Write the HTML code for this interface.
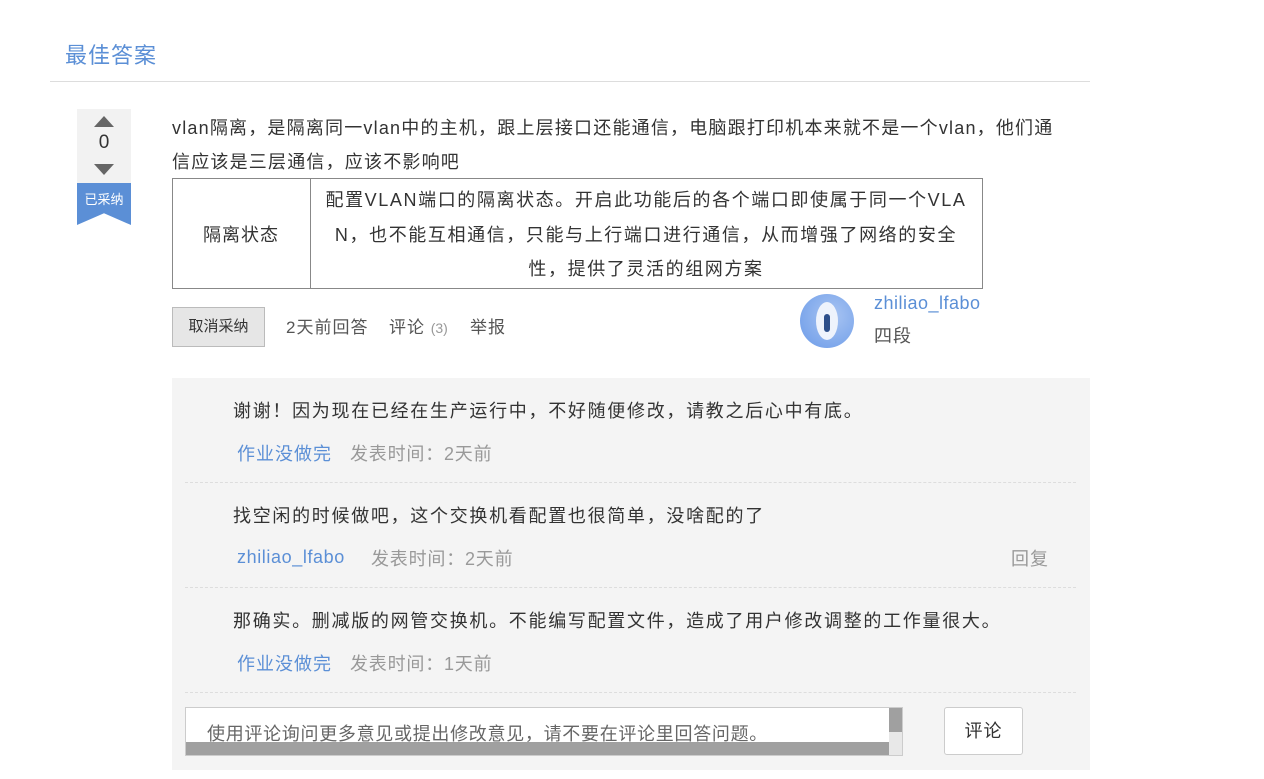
<!DOCTYPE html>
<html><head><meta charset="utf-8"><style>
body{margin:0;background:#fff;font-family:"Liberation Sans","Noto Sans CJK SC",sans-serif;color:#333;width:1264px;height:779px;overflow:hidden;position:relative}
.a{position:absolute;white-space:nowrap}
.blue{color:#5b8fd6}
.gray{color:#999}
.c{font-size:18px;letter-spacing:1.7px}
</style></head><body>
<div class="a blue" style="left:65px;top:38px;font-size:22px;letter-spacing:1px">最佳答案</div>
<div class="a" style="left:50px;top:81px;width:1040px;height:1px;background:#ddd"></div>

<div class="a" style="left:77px;top:109px;width:54px;height:74px;background:#f2f2f2"></div>
<div class="a" style="left:94px;top:116px;width:0;height:0;border-left:10px solid transparent;border-right:10px solid transparent;border-bottom:11px solid #666"></div>
<div class="a" style="left:77px;top:132px;width:54px;text-align:center;font-size:19px;color:#333">0</div>
<div class="a" style="left:94px;top:164px;width:0;height:0;border-left:10px solid transparent;border-right:10px solid transparent;border-top:11px solid #666"></div>
<div class="a" style="left:77px;top:183px;width:54px;height:42px;background:#5b8fd6;clip-path:polygon(0 0,100% 0,100% 100%,50% 72%,0 100%)"></div>
<div class="a" style="left:77px;top:189px;width:54px;text-align:center;font-size:13px;color:#fff">已采纳</div>

<div class="a c" style="left:172px;top:111px;line-height:34px;letter-spacing:1.2px">vlan隔离，是隔离同一vlan中的主机，跟上层接口还能通信，电脑跟打印机本来就不是一个vlan，他们通<br>信应该是三层通信，应该不影响吧</div>
<div class="a" style="left:172px;top:178px;width:809px;height:109px;border:1px solid #888"></div>
<div class="a" style="left:310px;top:178px;width:1px;height:111px;background:#888"></div>
<div class="a c" style="left:172px;top:221px;width:138px;text-align:center;letter-spacing:1px">隔离状态</div>
<div class="a c" style="left:311px;top:183px;width:670px;text-align:center;line-height:34.5px;letter-spacing:1.6px">配置VLAN端口的隔离状态。开启此功能后的各个端口即使属于同一个VLA<br>N，也不能互相通信，只能与上行端口进行通信，从而增强了网络的安全<br>性，提供了灵活的组网方案</div>

<div class="a" style="left:172px;top:307px;width:91px;height:38px;background:#e6e6e6;border:1px solid #bbb;font-size:15px;line-height:38px;text-align:center">取消采纳</div>
<div class="a" style="left:286px;top:313px;font-size:17px;color:#555;letter-spacing:1px">2天前回答</div>
<div class="a" style="left:389px;top:313px;font-size:17px;color:#555;letter-spacing:1px">评论 <span style="font-size:14px;color:#999;letter-spacing:0">(3)</span></div>
<div class="a" style="left:470px;top:313px;font-size:17px;color:#555;letter-spacing:1px">举报</div>

<div class="a" style="left:800px;top:294px;width:54px;height:54px;border-radius:50%;background:radial-gradient(circle at 60% 40%,#a8c4f2,#6a9ae8)"></div>
<div class="a" style="left:816px;top:302px;width:22px;height:38px;border-radius:50%;background:#eef3fc"></div>
<div class="a" style="left:824px;top:314px;width:6px;height:18px;border-radius:3px;background:#2d4f8a"></div>
<div class="a blue" style="left:874px;top:293px;font-size:18px;letter-spacing:0.5px">zhiliao_lfabo</div>
<div class="a" style="left:874px;top:322px;font-size:18px;color:#555;letter-spacing:1px">四段</div>

<div class="a" style="left:172px;top:378px;width:918px;height:392px;background:#f4f4f4"></div>
<div class="a c" style="left:233px;top:397px">谢谢！因为现在已经在生产运行中，不好随便修改，请教之后心中有底。</div>
<div class="a blue c" style="left:237px;top:440px;letter-spacing:1px">作业没做完</div>
<div class="a gray c" style="left:350px;top:440px;letter-spacing:0.8px">发表时间：2天前</div>
<div class="a" style="left:185px;top:482px;width:891px;border-top:1px dashed #ddd"></div>
<div class="a c" style="left:233px;top:502px">找空闲的时候做吧，这个交换机看配置也很简单，没啥配的了</div>
<div class="a blue" style="left:237px;top:547px;font-size:18px;letter-spacing:0.6px">zhiliao_lfabo</div>
<div class="a gray c" style="left:371px;top:545px;letter-spacing:0.8px">发表时间：2天前</div>
<div class="a gray c" style="left:1011px;top:545px;letter-spacing:1px">回复</div>
<div class="a" style="left:185px;top:587px;width:891px;border-top:1px dashed #ddd"></div>
<div class="a c" style="left:233px;top:607px">那确实。删减版的网管交换机。不能编写配置文件，造成了用户修改调整的工作量很大。</div>
<div class="a blue c" style="left:237px;top:650px;letter-spacing:1px">作业没做完</div>
<div class="a gray c" style="left:350px;top:650px;letter-spacing:0.8px">发表时间：1天前</div>
<div class="a" style="left:185px;top:692px;width:891px;border-top:1px dashed #ddd"></div>

<div class="a" style="left:185px;top:707px;width:716px;height:47px;background:#fff;border:1px solid #ccc;overflow:hidden">
<div class="a" style="left:21px;top:12px;font-size:18px;color:#666;letter-spacing:0.7px">使用评论询问更多意见或提出修改意见，请不要在评论里回答问题。</div>
<div class="a" style="left:0;top:34px;width:703px;height:13px;background:#a0a0a0"></div>
<div class="a" style="left:703px;top:0;width:13px;height:24px;background:#a0a0a0"></div>
<div class="a" style="left:703px;top:24px;width:13px;height:23px;background:#e8e8e8"></div>
</div>
<div class="a" style="left:944px;top:707px;width:77px;height:46px;background:#fff;border:1px solid #ccc;border-radius:3px;font-size:18px;line-height:46px;text-align:center;letter-spacing:1px">评论</div>
</body></html>
